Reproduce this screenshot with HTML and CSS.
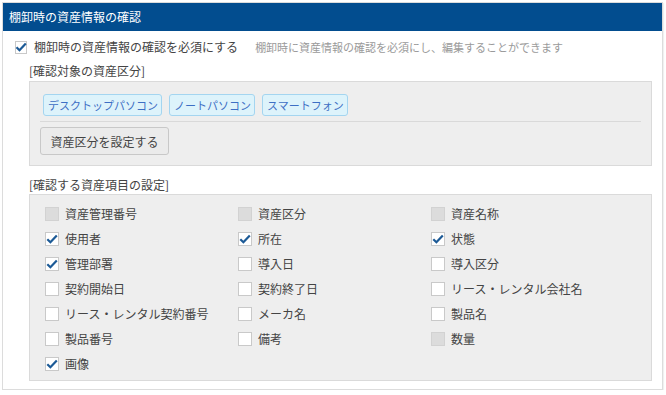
FILE: index.html
```html
<!DOCTYPE html>
<html lang="ja">
<head>
<meta charset="utf-8">
<link rel="stylesheet" href="styles.css">
</head>
<body>
<div class="panel">
  <div class="panel-head">棚卸時の資産情報の確認</div>
  <div class="panel-body">
    <div class="req-row">
      <span class="cb cb-top checked"><svg viewBox="0 0 12 12"><path d="M1.5 6.2 L4.5 9.2 L10.8 2.4"/></svg></span>
      <span class="req-label">棚卸時の資産情報の確認を必須にする</span>
      <span class="hint">棚卸時に資産情報の確認を必須にし、編集することができます</span>
    </div>

    <div class="sec-label">[確認対象の資産区分]</div>
    <div class="box box-cat">
      <div class="tags">
        <span class="tag">デスクトップパソコン</span>
        <span class="tag">ノートパソコン</span>
        <span class="tag">スマートフォン</span>
      </div>
      <div class="sep"></div>
      <button class="btn">資産区分を設定する</button>
    </div>

    <div class="sec-label sec-label-2">[確認する資産項目の設定]</div>
    <div class="box box-items">
      <div class="grid">
        <div class="item"><span class="cb disabled"></span>資産管理番号</div>
        <div class="item"><span class="cb disabled"></span>資産区分</div>
        <div class="item"><span class="cb disabled"></span>資産名称</div>

        <div class="item"><span class="cb checked"><svg viewBox="0 0 14 14"><path d="M2.3 7.2 L5.4 10.2 L11.8 3.4"/></svg></span>使用者</div>
        <div class="item"><span class="cb checked"><svg viewBox="0 0 14 14"><path d="M2.3 7.2 L5.4 10.2 L11.8 3.4"/></svg></span>所在</div>
        <div class="item"><span class="cb checked"><svg viewBox="0 0 14 14"><path d="M2.3 7.2 L5.4 10.2 L11.8 3.4"/></svg></span>状態</div>

        <div class="item"><span class="cb checked"><svg viewBox="0 0 14 14"><path d="M2.3 7.2 L5.4 10.2 L11.8 3.4"/></svg></span>管理部署</div>
        <div class="item"><span class="cb"></span>導入日</div>
        <div class="item"><span class="cb"></span>導入区分</div>

        <div class="item"><span class="cb"></span>契約開始日</div>
        <div class="item"><span class="cb"></span>契約終了日</div>
        <div class="item"><span class="cb"></span>リース・レンタル会社名</div>

        <div class="item"><span class="cb"></span>リース・レンタル契約番号</div>
        <div class="item"><span class="cb"></span>メーカ名</div>
        <div class="item"><span class="cb"></span>製品名</div>

        <div class="item"><span class="cb"></span>製品番号</div>
        <div class="item"><span class="cb"></span>備考</div>
        <div class="item"><span class="cb disabled"></span>数量</div>

        <div class="item"><span class="cb checked"><svg viewBox="0 0 14 14"><path d="M2.3 7.2 L5.4 10.2 L11.8 3.4"/></svg></span>画像</div>
      </div>
    </div>
  </div>
</div>
</body>
</html>
```

FILE: styles.css
```css
* { box-sizing: border-box; }
html, body {
  margin: 0;
  padding: 0;
  background: #ffffff;
}
body {
  font-family: "Noto Sans CJK JP", "Noto Sans", sans-serif;
  font-size: 12px;
  color: #444444;
  padding: 2px 0 0 2px;
}
.panel {
  width: 661px;
  height: 388px;
  border: 1px solid #dcdcdc;
  box-shadow: 1px 1px 1px rgba(0,0,0,0.06);
  background: #ffffff;
}
.panel-head {
  height: 28px;
  background: #024d8f;
  color: #ffffff;
  font-size: 12px;
  line-height: 28px;
  padding-left: 6px;
}
.panel-body {
  padding: 7px 9px 0 12px;
}
.req-row {
  display: flex;
  align-items: center;
  height: 18px;
}
.req-label {
  margin-left: 7px;
  font-size: 12px;
  line-height: 18px;
}
.hint {
  margin-left: 17px;
  font-size: 11px;
  color: #9a9a9a;
}
.cb {
  flex: none;
  display: inline-block;
  width: 14px;
  height: 14px;
  border: 1px solid #c9c9c9;
  background: #ffffff;
  position: relative;
}
.cb svg {
  position: absolute;
  left: -1px;
  top: -1px;
  width: 14px;
  height: 14px;
  fill: none;
  stroke: #1c5a96;
  stroke-width: 2.2;
}
.cb-top {
  width: 12px;
  height: 13px;
}
.cb-top svg {
  width: 12px;
  height: 12px;
}
.cb.disabled {
  background: #dcdcdc;
  border-color: #d2d2d2;
}
.sec-label {
  margin-left: 14px;
  margin-top: 6px;
  line-height: 18px;
  font-size: 12px;
}
.sec-label-2 {
  margin-top: 10px;
}
.box {
  margin-left: 14px;
  width: 623px;
  background: #eeeeee;
  border: 1px solid #dadada;
}
.box-cat {
  margin-top: 1px;
  padding: 12px 10px 10px 10px;
}
.tags {
  display: flex;
  gap: 7px;
  padding-left: 3px;
}
.tag {
  display: inline-block;
  height: 22px;
  line-height: 20px;
  padding: 0 3px 0 4px;
  font-size: 11px;
  color: #3d6fc4;
  background: #ddf3fb;
  border: 1px solid #a4d5f0;
  border-radius: 3px;
}
.sep {
  height: 1px;
  background: #d9d9d9;
  margin: 5px 0 5px 0;
}
.btn {
  display: block;
  height: 28px;
  width: 129px;
  padding: 0;
  font-family: inherit;
  font-size: 12px;
  color: #444444;
  background: #ebebeb;
  border: 1px solid #c8c8c8;
  border-radius: 3px;
}
.box-items {
  height: 187px;
  padding: 6px 0 0 15px;
}
.grid {
  display: grid;
  grid-template-columns: 193px 193px 193px;
  grid-auto-rows: 25px;
}
.item {
  display: flex;
  align-items: center;
  gap: 6px;
  font-size: 12px;
  color: #444444;
}
```
